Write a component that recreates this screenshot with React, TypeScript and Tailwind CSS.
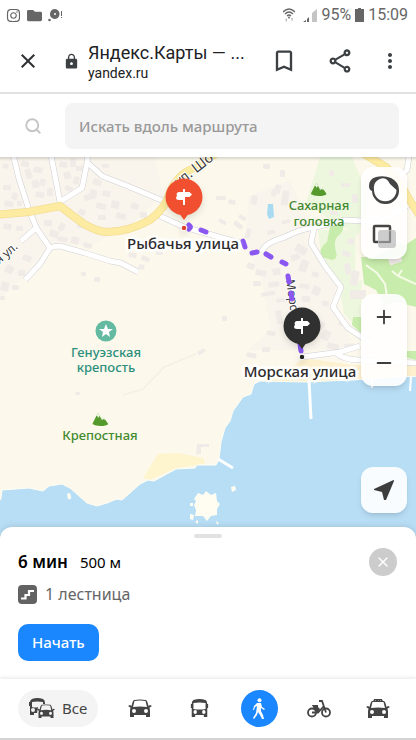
import { FaFolder, FaInstagram } from "react-icons/fa";
import {
  MdBookmarkBorder,
  MdClose,
  MdLock,
  MdMoreVert,
  MdOutlineShare,
} from "react-icons/md";
import { Minus, Plus, Search, X } from "lucide-react";
import clsx from "clsx";

const minorRoads = [
  "M12 150L19 179L29 210L37 229L50 248L40 264L25 280",
  "M50 150L60 202",
  "M88 150L87 163L82 188L61 201",
  "M88 163L102 176L130 187L168 203",
  "M50 248Q54 246 60 246L85 253L110 261L121 263L138 272",
  "M36 228L21 241",
  "M160 216L184 227L240 243",
  "M262 252Q264 243 285 237Q300 229 316 227L345 220L380 222L416 200",
  "M314 228L311 243L325 266L341 287L333 307L348 328L372 344",
  "M410 150L407 170L385 190",
  "M302 357L340 352L360 346M336 353Q344 360 360 360L416 363",
];

const mainRoads = [
  "M-5 215L28 212L60 206Q73 216 84 224Q98 232 107 232Q128 232 150 220Q166 208 170 192Q179 172 197 167L218 152",
  "M361 152L386 167Q400 180 407 196L420 216",
];

// x, y, width, height, angle
const buildings = [
  [3, 163, 6, 5, 10], [22, 160, 8, 6, 15], [24, 170, 6, 10, -20],
  [34, 166, 9, 6, 10], [31, 181, 7, 8, -15], [41, 178, 6, 7, 20],
  [36, 191, 9, 6, 10], [47, 188, 6, 8, 0], [3, 185, 8, 5, 0],
  [13, 192, 6, 7, 20], [5, 200, 9, 6, 10], [17, 201, 5, 5, 0],
  [60, 161, 8, 6, 10], [70, 158, 6, 9, 0], [63, 173, 7, 7, -15],
  [74, 176, 6, 8, 10], [66, 185, 8, 5, 20], [76, 166, 8, 5, 0],
  [94, 178, 9, 6, 20], [91, 189, 7, 9, 15], [103, 190, 8, 6, 10],
  [83, 196, 8, 6, -20], [97, 202, 10, 6, 15], [112, 200, 8, 8, 10],
  [80, 208, 7, 6, 25], [98, 215, 8, 5, 0], [117, 212, 10, 6, 15],
  [132, 202, 8, 6, 20], [140, 212, 7, 6, 0], [44, 220, 8, 6, 0],
  [51, 229, 9, 7, 20], [61, 222, 6, 8, 30], [58, 236, 10, 5, 10],
  [72, 236, 8, 7, 15], [84, 242, 9, 5, 15], [77, 222, 6, 6, 0],
  [4, 223, 8, 6, 10], [16, 226, 7, 5, 0], [24, 254, 9, 6, 20],
  [8, 264, 8, 8, 30], [18, 270, 7, 6, 0], [2, 281, 8, 9, 15],
  [12, 285, 7, 5, 0], [0, 296, 5, 4, 0], [81, 272, 5, 4, 0],
  [94, 277, 6, 5, 0], [102, 164, 7, 4, 0], [129, 252, 8, 5, 10],
  [142, 255, 9, 5, 20], [139, 264, 6, 5, 10], [156, 250, 7, 5, 0],
  [216, 196, 10, 4, 0], [229, 199, 7, 5, 10], [220, 218, 8, 4, 30],
  [236, 220, 10, 5, 40], [247, 228, 5, 10, 15], [240, 214, 8, 4, 30],
  [276, 184, 6, 9, 15], [283, 190, 7, 15, 10], [272, 189, 5, 7, 10],
  [281, 221, 9, 4, -15], [267, 231, 8, 4, -10], [263, 164, 7, 5, 0],
  [280, 170, 5, 7, 0], [252, 195, 6, 9, 10], [248, 262, 8, 6, 20],
  [256, 269, 11, 6, 10], [272, 269, 8, 7, -10], [253, 281, 8, 5, 0],
  [268, 283, 11, 5, -10], [261, 293, 14, 4, -10], [276, 299, 10, 4, -10],
  [298, 243, 12, 8, 30], [290, 256, 9, 6, -20], [302, 259, 8, 12, 20],
  [313, 271, 7, 5, 20], [300, 283, 10, 5, 10], [314, 285, 8, 9, 20],
  [302, 296, 8, 6, 0], [322, 301, 7, 5, 0], [318, 318, 10, 8, 40],
  [325, 329, 8, 10, 30], [340, 319, 9, 6, 20], [275, 311, 6, 14, -10],
  [267, 330, 9, 5, 10], [262, 347, 8, 5, 0], [247, 352, 10, 5, 10],
  [344, 264, 6, 11, -10], [352, 270, 8, 15, 10], [350, 292, 10, 7, 0],
  [348, 238, 7, 6, 10], [343, 250, 9, 5, 20], [330, 211, 8, 4, 0],
  [341, 183, 9, 4, 0], [352, 194, 6, 9, 0], [329, 170, 5, 6, 0],
  [388, 259, 13, 7, -20], [328, 342, 12, 6, 15], [344, 344, 10, 5, -5],
  [222, 316, 5, 5, 0], [75, 392, 5, 3, 0], [197, 352, 8, 4, -30],
];

const routeDashes = [
  "M189 225Q192 227 189 229",
  "M201 230L206 232",
  "M243 241L245 247",
  "M252 253L257 252",
  "M266 254L271 257",
  "M282 262L286 264",
  "M288 276L289 282",
  "M291 293L292 299",
  "M300 344L301 351",
];

function MapArt() {
  return (
    <svg
      viewBox="0 157 416 383"
      preserveAspectRatio="xMidYMin slice"
      className="block h-full w-full"
      aria-hidden="true"
    >
      <path fill="#fcf9ec" d="M0 150H1000V545H0Z" />
      <path
        fill="#f9f5ec"
        d="M0 157H155L163 195L130 226L90 246L60 244L20 280L0 300ZM248 196L290 180L311 228L324 261L338 286L330 305L352 340L340 350H248L270 330L262 280L246 250Z"
      />
      <path
        fill="#edf7de"
        d="M320 157H352L370 200L358 235L330 220L306 203ZM318 230L356 230L355 280L345 290L322 262ZM340 290L362 280L360 330L344 314Z"
      />
      <path
        fill="#c8ecac"
        d="M330 226L342 224Q346 229 338 236Q333 241 336 252Q338 259 332 260L322 257Q317 250 327 242L329 232ZM361 257L372 257L388 250L398 242L405 245L416 238V307L396 302L384 305L376 290L364 284ZM353 317L362 317V334L352 325ZM406 351H416V360L404 357Z"
      />
      <path fill="#fff0b9" fillOpacity=".6" d="M143 478L158 454L178 453L203 458L205 464L176 468L150 480Z" />
      <path fill="#fcf0cf" d="M286 372L304 358L352 365L416 363V379L258 383Z" />
      <g fill="#f1ebe8">
        {buildings.map(([x, y, w, h, a]) => (
          <rect
            key={`${x}-${y}`}
            x={x}
            y={y}
            width={w}
            height={h}
            rx="1"
            transform={`rotate(${a} ${x} ${y})`}
          />
        ))}
        <path d="M197 444H209V447H201V454H196ZM350 290H366V299H350Z" />
      </g>
      <path
        fill="none"
        stroke="#f5f0e6"
        strokeWidth="1.500"
        d="M123 395L143 389L164 367L196 354"
      />
      <path fill="#a8daf1" d="M268 204H273L274 217L269 219L267 214Z" />
      <path
        fill="none"
        stroke="#f6fbe8"
        strokeWidth="2"
        d="M366 265L377 273L385 284L387 296M392 271L398 276L416 284M398 276L402 270"
      />
      <path
        fill="#b8def5"
        stroke="#fffef4"
        strokeWidth="1"
        d="M-5 510L1 498L2 490L29 488L43 491L49 486L62 484L70 488L78 495L87 503L97 506L107 503L117 499L122 500L140 484L148 480L154 481L176 469L195 468L197 465L216 465L219 459L221 442L225 428L230 421L233 411L243 397L251 394L254 384L260 381L305 382L350 380L420 376V545H-5Z"
      />
      <path
        fill="none"
        stroke="#fff"
        strokeWidth="3"
        d="M309 379L310 400L311 419M218 459L233 468"
      />
      <path fill="none" stroke="#fff" strokeWidth="2" d="M372 378V388M411 376L410 391" />
      <path
        fill="#fffdf2"
        d="M198 493L203 495L206 491L211 495L216 493L217 501L220 504L217 509L217 515L211 516L207 521L203 516L195 516L196 510L194 505L196 501L194 499ZM231 487L235 486L236 490L232 492ZM190 503H193V506H190ZM190 514L194 515L193 520L190 519ZM195 522L198 520L198 524ZM216 521L219 523L217 525ZM67 494Q70 491 71 496Q72 500 68 499Z"
      />
      <g fill="none" strokeLinejoin="round">
        {minorRoads.map((d) => (
          <path key={d} d={d} stroke="#cfced4" strokeWidth="6" />
        ))}
        {minorRoads.map((d) => (
          <path key={d} d={d} stroke="#fff" strokeWidth="5" />
        ))}
        {mainRoads.map((d) => (
          <path key={d} d={d} stroke="#efd88e" strokeWidth="8" />
        ))}
        {mainRoads.map((d) => (
          <path key={d} d={d} stroke="#fcebA0" strokeWidth="7" />
        ))}
      </g>
      <g
        fill="#3b3b3b"
        stroke="#fff"
        strokeWidth="2"
        paintOrder="stroke"
        fontFamily="Noto Sans, sans-serif"
        fontSize="12"
      >
        <text transform="translate(-6 269) rotate(-41)">ая ул.</text>
        <text transform="translate(179 187) rotate(-38)" fontSize="14">
          ул. Шо
        </text>
        <text transform="translate(286 280) rotate(82)">Морс</text>
      </g>
      <g
        fill="none"
        stroke="#8a57f0"
        strokeWidth="5"
        strokeLinecap="round"
        strokeLinejoin="round"
      >
        {routeDashes.map((d) => (
          <path key={d} d={d} />
        ))}
      </g>
    </svg>
  );
}

function Pin({ color, dot, className }: { color: string; dot: string; className: string }) {
  return (
    <svg
      viewBox="0 0 48 58"
      className={clsx("absolute h-[58px] w-12 drop-shadow-md", className)}
      aria-hidden="true"
    >
      <path fill={color} d="M19 38L24 45L29 38Z" />
      <circle cx="24" cy="22" r="18.500" fill={color} />
      <path
        fill="#fff"
        d="M23 14H25V17H29.500L32 19.500L29.500 22H25V30H23V25H19Q16 25 16 22.500L17 21Q16 19.500 17 18Q18 16.500 20 17H23Z"
      />
      <circle cx="24" cy="53" r="2.800" fill={dot} stroke="#fff" />
    </svg>
  );
}

function Mountain() {
  return (
    <svg viewBox="0 0 16 15" className="h-[15px] w-4" aria-hidden="true">
      <path fill="#559a2d" d="M0 12L4 4L6 1L9 7L11 5L16 12Q14 14 8 14Q3 14 0 12Z" />
      <path fill="#f2f8e8" d="M4 4L6 1L8 5L7 4L6 6L5 4ZM8 9L11 4L13 8L11 7L10 8L9 7Z" />
    </svg>
  );
}

function CarBody() {
  return (
    <path
      fillRule="evenodd"
      d="M6 1Q12 0 18 1Q19.500 2 20.500 7L22 6Q24 6 23.500 7.500L21.500 8.500Q22 10 22 12V18H18V16H6V18H2V12Q2 10 2.500 8.500L.5 7.500Q0 6 2 6L3.500 7Q4.500 2 6 1ZM6.500 2L5 8Q12 7 19 8L17.500 2Q12 1 6.500 2ZM6 10A2 2 0 1 0 6 14A2 2 0 1 0 6 10ZM18 10A2 2 0 1 0 18 14A2 2 0 1 0 18 10Z"
    />
  );
}

function CarIcon() {
  return (
    <svg viewBox="0 0 24 20" fill="currentColor" className="h-5 w-6" aria-hidden="true">
      <CarBody />
    </svg>
  );
}

function TaxiIcon() {
  return (
    <svg viewBox="0 0 24 20" fill="currentColor" className="h-5 w-6" aria-hidden="true">
      <path d="M7 3L8 0Q12 -1 16 0L17 3Z" />
      <path stroke="#fff" strokeWidth=".6" d="M9 2L10 1M12 2L13 1M14 2L15 1" />
      <g transform="translate(0 1)">
        <CarBody />
      </g>
    </svg>
  );
}

const busPath =
  "M4 1Q11 -1 18 1Q20 2 20 5H21V9H20V18H16V16H6V18H2V9H1V5H2Q2 2 4 1ZM4 4V10Q11 11 18 10V4Q11 3 4 4ZM6 11A2 2 0 1 0 6 15A2 2 0 1 0 6 11ZM16 11A2 2 0 1 0 16 15A2 2 0 1 0 16 11Z";

function BusIcon() {
  return (
    <svg
      viewBox="0 0 22 20"
      fill="currentColor"
      preserveAspectRatio="none"
      className="h-5 w-[19px]"
      aria-hidden="true"
    >
      <path fillRule="evenodd" d={busPath} />
    </svg>
  );
}

function AllIcon() {
  return (
    <svg viewBox="0 0 26 21" fill="currentColor" className="h-[21px] w-[26px]" aria-hidden="true">
      <path
        fillRule="evenodd"
        d="M3 1Q8 -1 14 1Q16 2 16 5V6H14V4Q8 3 3 4V9Q6 10 9 9L8 15H5V17H1V8H0V4H1Q1 2 3 1ZM4 10A2 2 0 1 0 4 14A2 2 0 1 0 4 10Z"
      />
      <g transform="translate(8 6) scale(.75 .78)">
        <CarBody />
      </g>
    </svg>
  );
}

function BikeIcon() {
  return (
    <svg
      viewBox="0 0 24 18"
      fill="none"
      stroke="currentColor"
      strokeWidth="1.800"
      className="h-[18px] w-6"
      aria-hidden="true"
    >
      <circle cx="5" cy="12.500" r="4" />
      <circle cx="19" cy="12.500" r="4" />
      <path d="M5 12.500H11L17 6M19 12.500L15 1H12M8 6L11 12" />
      <path fill="currentColor" stroke="none" d="M5 5H11V7L13 9L11 13L7 9Z" />
    </svg>
  );
}

function WalkIcon() {
  return (
    <svg viewBox="0 0 14 22" className="h-[22px] w-3.5" aria-hidden="true">
      <circle cx="7.500" cy="2.200" r="2" fill="#fff" />
      <path
        fill="#fff"
        d="M5 5H9L10 9L13 11L12 12L9 10V13L11 17L12 21H10L8 17L6 14L5 17L2 21L1 20L4 15L5 8L3 9L2 12H1L2 8Z"
      />
    </svg>
  );
}

function StairsIcon() {
  return (
    <svg viewBox="0 0 19 19" className="size-[19px]" aria-hidden="true">
      <rect width="19" height="19" rx="4" fill="#626262" />
      <path fill="none" stroke="#fff" strokeWidth="2.200" d="M3 13.500H7.500V10H11V6H16" />
    </svg>
  );
}

function StatusBar() {
  return (
    <div className="flex h-[30px] shrink-0 items-center justify-between pr-2 pl-1.5 text-[#666]">
      <div className="flex items-center gap-1.5">
        <FaInstagram className="size-[15px]" />
        <FaFolder className="size-[15px]" />
        <svg viewBox="0 0 15 14" fill="currentColor" className="h-3.5 w-[15px]" aria-hidden="true">
          <path
            fillRule="evenodd"
            d="M7 1A5 5 0 1 1 6 11L4 10A5 5 0 0 1 7 1ZM7 5A1 1 0 1 0 7 7A1 1 0 1 0 7 5Z"
          />
          <circle cx="1.500" cy="12" r="1.300" />
          <path d="M13 3H14V8H13ZM13 9H14V10H13Z" />
        </svg>
      </div>
      <div className="flex items-center gap-1">
        <svg viewBox="0 0 12 15" className="mr-1 h-[15px] w-3" aria-hidden="true">
          <path
            fill="none"
            stroke="currentColor"
            strokeWidth="1.300"
            d="M0 4Q6 -2 12 4M2 6Q6 2 10 6M4 8Q6 6 8 8"
          />
          <circle cx="6" cy="9.500" r="1" fill="currentColor" />
          <path fill="#bbb" d="M2 12L4 10V14ZM8 10H10L9 14Z" />
        </svg>
        <svg viewBox="0 0 14 13" className="h-[13px] w-3.5" aria-hidden="true">
          <path fill="currentColor" d="M0 13L3 11V13ZM4 10L6 8V13H4Z" />
          <path fill="#c4c4c4" d="M9 4L14 0V13H9Z" />
        </svg>
        <span className="text-base">95%</span>
        <svg viewBox="0 0 9 14" className="h-3.5 w-[9px]" aria-hidden="true">
          <path fill="currentColor" d="M3 0H6V1H9V14H0V1H3Z" />
        </svg>
        <span className="text-base">15:09</span>
      </div>
    </div>
  );
}

function BrowserBar() {
  return (
    <header className="flex h-16 shrink-0 items-center border-b-2 border-[#e1e2e3] pr-3.5 pl-4 text-[#3c4043]">
      <button type="button" aria-label="Закрыть">
        <MdClose className="size-6 text-[#303134]" />
      </button>
      <MdLock className="ml-[23px] size-[17px] shrink-0" />
      <div className="ml-2 flex-1 text-[#202124]">
        <h1 className="text-lg leading-6 whitespace-nowrap">Яндекс.Карты — ...</h1>
        <p className="text-sm leading-4">yandex.ru</p>
      </div>
      <div className="flex items-center gap-7">
        <button type="button" aria-label="Добавить в закладки">
          <MdBookmarkBorder className="size-7" />
        </button>
        <button type="button" aria-label="Поделиться">
          <MdOutlineShare className="size-7" />
        </button>
        <button type="button" aria-label="Меню" className="-ml-1">
          <MdMoreVert className="size-6" />
        </button>
      </div>
    </header>
  );
}

function MapControls() {
  return (
    <div className="absolute top-2.5 right-[9px] bottom-[26px] flex flex-col text-[#3d3d3d]">
      <div className="flex w-[46px] flex-col rounded-xl bg-white/90 shadow-md">
        <button type="button" aria-label="Панорамы" className="grid h-[46px] place-items-center">
          <svg viewBox="0 0 30 28" className="h-7 w-[30px]" aria-hidden="true">
            <path
              fill="#444"
              d="M0 10Q0 3 7 1Q15 -1 22 2Q30 6 30 14A13.500 13.500 0 0 1 3 15Q0 14 0 10Z"
            />
            <path fill="#fff" d="M5 14Q4 7 9 4Q13 1 17 3Q19 4 21 8L27.500 14A11.200 11.200 0 0 1 5 14Z" />
          </svg>
        </button>
        <button type="button" aria-label="Слои" className="grid h-[46px] place-items-center">
          <svg viewBox="0 0 24 24" className="size-6" aria-hidden="true">
            <rect x="2" y="2" width="16" height="16" rx="1" fill="none" stroke="#444" strokeWidth="2.500" />
            <rect x="6" y="6" width="18" height="18" rx="3" fill="#c4c4c4" fillOpacity=".85" />
            <path fill="none" stroke="#888" strokeWidth="2" d="M7 18H18V7" />
          </svg>
        </button>
      </div>
      <div className="mt-[35px] flex w-[46px] flex-col rounded-xl bg-white/90 shadow-md">
        <button type="button" aria-label="Приблизить" className="grid h-[46px] place-items-center">
          <Plus className="size-[22px]" />
        </button>
        <button type="button" aria-label="Отдалить" className="grid h-[46px] place-items-center">
          <Minus className="size-[22px]" />
        </button>
      </div>
      <button
        type="button"
        aria-label="Моё местоположение"
        className="mt-auto grid size-[46px] place-items-center rounded-xl bg-white/90 shadow-md"
      >
        <svg viewBox="0 0 20 20" fill="currentColor" className="size-5" aria-hidden="true">
          <path d="M19.500 0Q20 0 20 1L12 20L10 20L8 12L0 10V9Z" />
        </svg>
      </button>
    </div>
  );
}

const haloWhite =
  "[text-shadow:0_0_1px_#fff,0_0_2px_#fff,2px_2px_1px_#fff,-2px_-2px_1px_#fff,2px_-2px_1px_#fff,-2px_2px_1px_#fff,3px_0_2px_#fff,-3px_0_2px_#fff,0_3px_2px_#fff,0_-3px_2px_#fff]";

function RouteMap() {
  return (
    <section aria-label="Карта" className="relative min-h-80 flex-1 overflow-hidden">
      <div className="absolute inset-0">
        <MapArt />
      </div>
      <div className="absolute inset-x-0 top-0 h-1 bg-linear-to-b from-black/15 to-transparent" />

      <div className="absolute top-[163px] left-[106px] flex -translate-x-1/2 flex-col items-center text-[13px] leading-[15px] font-medium text-[#2c8f7c]">
        <svg viewBox="0 0 22 22" className="mb-[3px] size-[22px]" aria-hidden="true">
          <circle cx="11" cy="11" r="10.500" fill="#63baa1" />
          <path fill="#fff" d="M11 4L13 9L18 9L14 12L15 17L11 14L7 17L8 12L4 9L9 9Z" />
        </svg>
        <span>Генуэзская</span>
        <span>крепость</span>
      </div>
      <div className="absolute top-[255px] left-[100px] flex -translate-x-1/2 flex-col items-center gap-px text-[13px] leading-[15px] font-medium text-[#438a31]">
        <Mountain />
        <span>Крепостная</span>
      </div>
      <div className="absolute top-[25px] left-[319px] flex -translate-x-1/2 flex-col items-center gap-px text-[13px] leading-[15px] font-medium text-[#438a31]">
        <Mountain />
        <span>Сахарная</span>
        <span>головка</span>
      </div>

      <Pin color="#f0502f" dot="#dd422d" className="top-[18px] left-[160px]" />
      <Pin color="#303030" dot="#222" className="top-[147px] left-[278px]" />
      <p
        className={clsx(
          "absolute top-[76px] left-[183px] -translate-x-1/2 text-[15px] leading-5 font-medium whitespace-nowrap text-[#2c2c2c]",
          haloWhite,
        )}
      >
        Рыбачья улица
      </p>
      <p
        className={clsx(
          "absolute top-[204px] left-[300px] -translate-x-1/2 text-[15px] leading-5 font-medium whitespace-nowrap text-[#2c2c2c]",
          haloWhite,
        )}
      >
        Морская улица
      </p>

      <MapControls />
    </section>
  );
}

function RouteSheet() {
  return (
    <section className="relative -mt-3 shrink-0 rounded-t-xl bg-white px-[18px] pt-[7px] pb-[18px] shadow-[0_0_6px_rgba(0,0,0,0.15)]">
      <div className="mx-auto h-1 w-7 rounded-full bg-[#e2e2e2]" />
      <div className="mt-2.5 flex items-center justify-between pr-px">
        <h2 className="flex items-baseline gap-3 leading-6 text-black">
          <span className="text-[17px] font-semibold">6 мин</span>
          <span className="text-[15px]">500 м</span>
        </h2>
        <button
          type="button"
          aria-label="Закрыть маршрут"
          className="grid size-7 place-items-center rounded-full bg-[#ccc] text-white"
        >
          <X className="size-4" strokeWidth={2} />
        </button>
      </div>
      <p className="mt-1.5 flex items-center gap-2 text-base leading-6 text-[#666]">
        <StairsIcon />
        1 лестница
      </p>
      <button
        type="button"
        className="mt-[18px] block h-[37px] rounded-[10px] bg-[#1a87ff] px-3.5 text-[15px] font-medium text-white"
      >
        Начать
      </button>
    </section>
  );
}

function TransportTabs() {
  return (
    <nav
      aria-label="Способ передвижения"
      className="relative flex h-[61px] shrink-0 items-center border-b-2 border-[#d4d4d4] bg-white pr-2 pl-[18px] text-[#444] shadow-[0_-1px_4px_rgba(0,0,0,0.1)]"
    >
      <button
        type="button"
        className="flex h-[37px] items-center gap-[7px] rounded-full bg-[#f4f4f4] px-[11px] text-[15px]"
      >
        <AllIcon />
        Все
      </button>
      <div className="ml-3 grid flex-1 grid-cols-5 place-items-center">
        <button type="button" aria-label="На машине">
          <CarIcon />
        </button>
        <button type="button" aria-label="На автобусе">
          <BusIcon />
        </button>
        <button
          type="button"
          aria-label="Пешком"
          aria-pressed="true"
          className="grid size-[37px] place-items-center rounded-full bg-[#1a87ff]"
        >
          <WalkIcon />
        </button>
        <button type="button" aria-label="На велосипеде">
          <BikeIcon />
        </button>
        <button type="button" aria-label="На такси">
          <TaxiIcon />
        </button>
      </div>
    </nav>
  );
}

export default function App() {
  return (
    <main className="flex min-h-screen flex-col bg-white font-['Noto_Sans',sans-serif]">
      <div className="font-['Roboto',sans-serif]">
        <StatusBar />
        <BrowserBar />
      </div>
      <form role="search" className="flex h-[63px] shrink-0 items-center pr-[17px] pl-6">
        <button type="button" aria-label="Найти" className="text-[#c5c5c5]">
          <Search className="size-[18px]" strokeWidth={2.5} />
        </button>
        <input
          type="search"
          aria-label="Искать вдоль маршрута"
          placeholder="Искать вдоль маршрута"
          className="ml-[23px] h-[46px] min-w-0 flex-1 rounded-lg bg-[#f4f4f4] px-3.5 text-[15px] font-medium outline-none placeholder:text-[#999]"
        />
      </form>
      <RouteMap />
      <RouteSheet />
      <TransportTabs />
    </main>
  );
}
